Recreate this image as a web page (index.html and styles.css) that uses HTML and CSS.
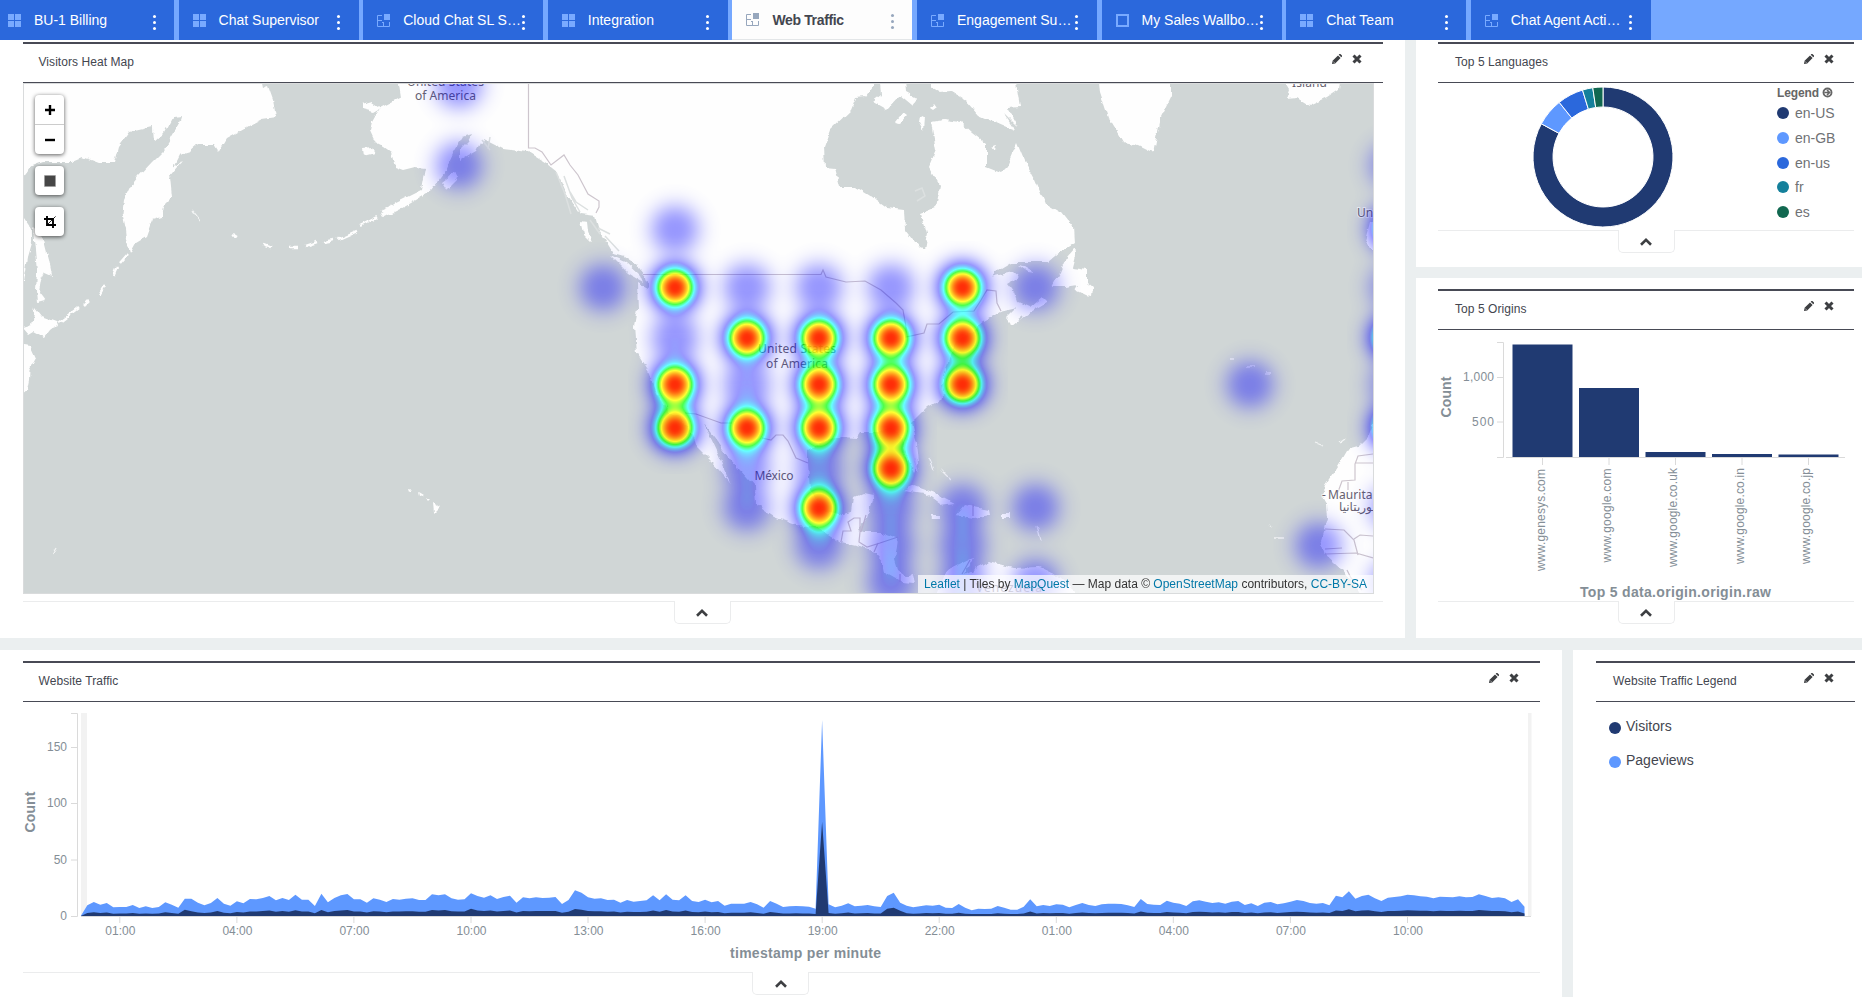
FILE: index.html
```
<!DOCTYPE html>
<html lang="en">
<head>
<meta charset="utf-8">
<title>Web Traffic</title>
<link rel="stylesheet" href="styles.css">
</head>
<body>
<svg class="defs" width="0" height="0" aria-hidden="true">
  <symbol id="i-grid" viewBox="0 0 13 13"><path d="M0 0h6v6H0zM7 0h6v6H7zM0 7h6v6H0zM7 7h6v6H7z" fill="currentColor"/></symbol>
  <symbol id="i-dash" viewBox="0 0 13 13"><path d="M7 0h6v6H7z" fill="currentColor"/><path d="M5 1.500H.5v11h12V8M.5 6.500h4.500M6.500 12.500V9M5 8.500h2" fill="none" stroke="currentColor"/></symbol>
  <symbol id="i-box" viewBox="0 0 13 13"><path d="M1 1h11v11H1z" fill="none" stroke="currentColor" stroke-width="2"/></symbol>
  <symbol id="i-pen" viewBox="0 0 10 10"><path d="M0 10l.6-3.200L6 1.400 8.600 4 3.200 9.400zM6.700.7L7.400 0h1L10 1.600v1L9.300 3.300z" fill="currentColor"/><path d="M1.300 7.600l1.100 1.100" stroke="#fff" stroke-width=".7"/></symbol>
  <symbol id="i-x" viewBox="0 0 10 10"><path d="M1.500 1.500l7 7M8.500 1.500l-7 7" stroke="currentColor" stroke-width="3"/></symbol>
  <symbol id="i-up" viewBox="0 0 12 8"><path d="M1 6.800L6 1.900l5 4.900" fill="none" stroke="currentColor" stroke-width="2.600"/></symbol>
</svg>

<nav class="tabs">
  <div class="tab"><svg class="ico"><use href="#i-grid"/></svg><span>BU-1 Billing</span><i class="dots"></i></div>
  <div class="tab"><svg class="ico"><use href="#i-grid"/></svg><span>Chat Supervisor</span><i class="dots"></i></div>
  <div class="tab"><svg class="ico"><use href="#i-dash"/></svg><span>Cloud Chat SL S…</span><i class="dots"></i></div>
  <div class="tab"><svg class="ico"><use href="#i-grid"/></svg><span>Integration</span><i class="dots"></i></div>
  <div class="tab active"><svg class="ico"><use href="#i-dash"/></svg><span>Web Traffic</span><i class="dots"></i></div>
  <div class="tab"><svg class="ico"><use href="#i-dash"/></svg><span>Engagement Su…</span><i class="dots"></i></div>
  <div class="tab"><svg class="ico"><use href="#i-box"/></svg><span>My Sales Wallbo…</span><i class="dots"></i></div>
  <div class="tab"><svg class="ico"><use href="#i-grid"/></svg><span>Chat Team</span><i class="dots"></i></div>
  <div class="tab"><svg class="ico"><use href="#i-dash"/></svg><span>Chat Agent Acti…</span><i class="dots"></i></div>
</nav>

<main class="board">
  <div class="row top">
    <section class="panel heat">
      <header class="head"><h2>Visitors Heat Map</h2><div class="acts"><svg><use href="#i-pen"/></svg><svg><use href="#i-x"/></svg></div></header>
      <div class="map">
        <svg class="base" viewBox="24 84 1349 510">
          <defs><filter id="coast" x="0" y="0" width="100%" height="100%" color-interpolation-filters="sRGB"><feTurbulence type="fractalNoise" baseFrequency=".1" numOctaves="3" seed="4"/><feDisplacementMap in="SourceGraphic" scale="6" xChannelSelector="R" yChannelSelector="G"/></filter></defs>
          <g class="land" filter="url(#coast)">
            <rect x="-20" y="40" width="1440" height="600" fill="none"/>
            <path d="M10 70H258L262 88 268 86 273 100 276 117 262 119 245 128 238 132 227 138 218 153 213 145 198 145 190 152 180 155 174 167 182 162 170 177 172 197 164 205 162 217 152 220 146 237 136 243 130 254 127 240 126 230 122.500 213 124 200 130 187 138 177 152 162 164 150 174 133 179 126 182 117 172 118 164 133 153 143 152 127 130 132 119 147 115 163 99 163 83 157 71 162 43 162 30 167 22 178z"/>
            <path d="M16 205L24 218 32 230 32 243 28 257 24 282 16 282z"/>
            <path d="M33 228L43 237 49 260 52 275 45 272 41 280 39 292 45 300 37 302 36 290 37 273 35 250z"/>
            <path d="M35 308L42 317 56 322 58 327 50 330 44 338 33 332 28 335 22 328 32 325z"/>
            <path d="M16 345L31 347 36 358 29.500 370 29 380 27 390 20 396z"/>
            <path d="M395 70L399 84 401 97 380 108 372 122 370 130 376 143 384 147 391 152 395 167 403 170 415 167 425 168 421 190 397 202 380 214 382 218 400 209 430 191 445 172 453 154 463 137 472 134 468 141 460 149 460 161 477 151 483 139 503 149 528 152 547 164 557 172 567 194 580 214 595 216 598 227 613 253 624 256 637 265 646 277 648 288 637 282 638 310 635 327 637 353 649 373 656 393 667 410 681 418 692 433 697 447 713 463 730 483 717 453 706 430 703 423 714 437 731 460 755 487 756 505 774 517 796 525 817 527 842 543 864 548 874 552 883 563 885 572 903 582 914 583 912 575 906 577 897 570 894 560 897 538 881 532 864 532 858 530 867 517 874 495 864 493 853 498 851 512 839 515 824 512 810 490 808 463 808 450 824 440 842 437 856 438 860 432 881 432 890 427 901 437 908 460 914 472 919 463 917 443 912 423 928 407 944 398 942 383 946 370 956 343 983 322 1000 312 1017 308 1007 318 1012 325 1022 317 1033 310 1047 302 1042 297 1030 307 1018 302 1015 293 1008 284 1019 277 1013 272 990 277 987 282 1000 268 1010 262 1033 262 1048 262 1060 252 1074 243 1073 227 1062 213 1045 203 1035 180 1024 160 1017 143 1007 167 1001 173 986 167 986 143 973 133 961 122 944 120 931 122 936 150 929 167 940 187 936 207 921 213 927 233 924 250 919 248 905 230 904 210 887 208 872 197 856 187 840 187 835 168 825 167 824 147 830 130 851 110 856 98 866 97 875 84 875 70z"/>
            <path d="M879 70H904L906 92 917 98 912 105 900 95 886 110 872 102 881 95z"/>
            <path d="M931 70H1014L1020 107 1007 108 1018 127 1004 113 1016 131 1003 126 978 115 965 100 952 92 940 93 931 88z"/>
            <path d="M896 122L904 112 908 115 901 123zM919 122l1-6 4 2-1 12zM930 108l4-5 3 4-4 3zM993 146l4-2-1 6zM362 105l10-3 9 6-7 4-12-3zM362 149l10-1 3 5-12 3z"/>
            <path d="M1098 70H1171V97L1161 117 1154 153 1138 145 1123 142 1108 117 1100 93z"/>
            <path d="M1277 70H1341L1339 90 1327 98 1310 106 1297 98 1286 99 1289 90z"/>
            <path d="M1074 249L1076 252 1072 268 1087 270 1087 283 1093 288 1092 296 1085 295 1075 290 1078 285 1065 287 1052 287 1060 273 1067 257zM1018 265l6 1 12 7-8-1zM442 182l13-10 3 7-11 11zM610 255L626 262 640 275 643 282 628 273zM580 221l7 1 1 9 4 12-9-9z"/>
            <path d="M903 490L914 485 935 493 955 503 940 505 924 493zM956 515L964 505 989 510 990 515 974 518zM930 515h10v4h-8zM1001 514h10v4h-10zM433 503l7 4-6 6zM419 492l5 3-4 1zM425 497l5 2-2 2zM408 489l4 1-3 2z"/>
            <path d="M947 570L974 557 964 575 989 562 1014 568 1039 567 1060 577 1085 600H935z"/>
            <path d="M1390 420L1373 424 1368 437 1358 447 1347 450 1337 467 1325 485 1322 495 1327 504 1328 519 1321 541 1325 554 1343 570 1357 589 1370 610H1390zM1390 222l-20 0-5 20 7 7h18z"/>
            <path d="M127 255L120 263M117 267L113 277M105 285L99 295M89 301L84 306M79 308L58 324M232 233l5 3M263 245l8 3M290 247h8M305 246l12-4M322 242l12-2M338 239l18-8M360 226l18-9M381 212l16-7" class="isl"/>
            <path d="M915 459l3 12M1316 443l8 3M1340 442l4-3M1269 524l3 2M1275 538h9M1230 359h3M1246 366h10M1266 373h5M929 457l5 12M941 470l10 10M1037 525l4 15M192 211l8 10M57 547l-4 7" class="tiny"/>
          </g>
          <g class="sea"><path d="M556 172l9 22 6 20M564 176l8 22 8 14M570 192l6 10 12 8M590 220l10 14M605 236l14 15M598 228l12 6M482 140l8 10M490 137l-2 12M915 191l7-3 3 8-8 5"/></g>
          <g class="borders">
            <path d="M528.500 84V148H535L542 152 551 165 564 155 570 165 578 175 588 194 599 201V207L596 213"/>
            <path d="M643 274.500H821L823 270 826 277 846 282 865 281 881 290 896 303 903 310 906 327V337L924 333 927 324H939L953 312 974 311 981 300 987 290 996 291 997 303 1001 311"/>
            <path d="M685 413L696 414 721 423H732M762 438L771 440 776 435H783L788 441 796 458 808 463"/>
            <path d="M841 542L843 531H851L848 522 854 518H860V532M861 532L866 515M860 532L859 542 867 547 880 543 898 537M874 552L878 543M900 582V574M973 504V516M962 574L970 560"/>
            <path d="M1373 454L1358 456 1355 464V480L1342 481 1338 492M1355 463H1373M1348 490V482M1325 554L1356 553 1373 558M1325 549L1342 548M1325 529L1344 530 1354 540 1358 555M1354 539L1360 535 1373 536M1347 570L1351 578 1362 590"/>
          </g>
          <g class="names">
            <text x="407" y="86" textLength="77">United States</text><text x="415" y="100" textLength="61">of America</text>
            <text x="758" y="353" textLength="78">United States</text><text x="766" y="367.500" textLength="62">of America</text>
            <text x="754.500" y="480" textLength="39">México</text><text x="1292" y="87" textLength="35">Island</text>
            <text x="1357" y="217">United</text><text x="1328" y="499" textLength="62">Mauritanie</text><text x="1322" y="499" >-</text>
            <text x="1339" y="511" class="ar" direction="rtl" text-anchor="end">موريتانيا</text>
            <text x="976" y="592" textLength="66">Venezuela</text>
          </g>
        </svg>
        <canvas class="blobs" id="heat" width="1349" height="510"></canvas>
        <div class="ctl">
          <div class="btns"><button><svg viewBox="0 0 12 12"><path d="M6 1v10M1 6h10" stroke="#000" stroke-width="2.400"/></svg></button><button><svg viewBox="0 0 12 12"><path d="M1 6h10" stroke="#000" stroke-width="2.400"/></svg></button></div>
          <div class="btns"><button><svg viewBox="0 0 12 12"><path d="M.5.500h11v11H.5z" fill="#464646" stroke="#999" stroke-width=".5"/></svg></button></div>
          <div class="btns"><button><svg viewBox="0 0 14 14"><path d="M3.500 0v10.500H14M0 3.500h10.500V14" fill="none" stroke="#000" stroke-width="2.200"/><path d="M4 10L13.500.5" stroke="#000"/></svg></button></div>
        </div>
        <div class="attr"><a>Leaflet</a> | Tiles by <a>MapQuest</a> — Map data © <a>OpenStreetMap</a> contributors, <a>CC-BY-SA</a></div>
      </div>
      <footer class="foot"><div class="fold"><svg><use href="#i-up"/></svg></div></footer>
    </section>

    <div class="side">
      <section class="panel langs">
        <header class="head"><h2>Top 5 Languages</h2><div class="acts"><svg><use href="#i-pen"/></svg><svg><use href="#i-x"/></svg></div></header>
        <div class="langbody">
          <svg class="donut" id="donut" viewBox="-72 -72 144 144"></svg>
          <div class="legend">
            <b>Legend <svg viewBox="0 0 12 12"><circle cx="6" cy="6" r="4.400" fill="none" stroke="#666" stroke-width="2"/><path d="M2.500 6h6M5.500 3.300L8.200 6 5.500 8.700" fill="none" stroke="#666" stroke-width="1.800"/></svg></b>
            <p><i class="c1"></i>en-US</p><p><i class="c2"></i>en-GB</p><p><i class="c3"></i>en-us</p><p><i class="c4"></i>fr</p><p><i class="c5"></i>es</p>
          </div>
        </div>
        <footer class="foot"><div class="fold"><svg><use href="#i-up"/></svg></div></footer>
      </section>
      <section class="panel origins">
        <header class="head"><h2>Top 5 Origins</h2><div class="acts"><svg><use href="#i-pen"/></svg><svg><use href="#i-x"/></svg></div></header>
        <svg class="bars" viewBox="1438 330 416 271">
          <g class="axis"><path d="M1497 342.500H1503.500V457.500H1497M1497 377.500H1503M1497 422H1503M1506 457.500H1845M1542.500 458V465M1609 458V465M1675.500 458V465M1742 458V465M1808.500 458V465"/></g>
          <g fill="#203a72"><path d="M1512.500 344.500h60V457h-60zM1579 388h60v69h-60zM1645.500 452h60v5h-60zM1712 454h60v3h-60zM1778.500 454.500h60v2.500h-60z"/></g>
          <g class="lab"><text x="1494" y="381" text-anchor="end" textLength="31">1,000</text><text x="1494" y="426" text-anchor="end" textLength="22">500</text>
            <text transform="translate(1545 571) rotate(-90)" textLength="102">www.genesys.com</text>
            <text transform="translate(1611 562.500) rotate(-90)" textLength="94">www.google.com</text>
            <text transform="translate(1677 567) rotate(-90)" textLength="99">www.google.co.uk</text>
            <text transform="translate(1744 564) rotate(-90)" textLength="96">www.google.co.in</text>
            <text transform="translate(1810 564) rotate(-90)" textLength="96">www.google.co.jp</text></g>
          <g class="ttl"><text transform="translate(1451 417.500) rotate(-90)" textLength="41">Count</text><text x="1580" y="597" textLength="191">Top 5 data.origin.origin.raw</text></g>
        </svg>
        <footer class="foot"><div class="fold"><svg><use href="#i-up"/></svg></div></footer>
      </section>
    </div>
  </div>

  <div class="row bottom">
    <section class="panel traffic">
      <header class="head"><h2>Website Traffic</h2><div class="acts"><svg><use href="#i-pen"/></svg><svg><use href="#i-x"/></svg></div></header>
      <svg class="area" viewBox="23 702 1517 270">
        <path d="M81 713h6v203h-6zM1528 713h3.500v203h-3.500z" fill="#f2f2f2"/>
        <path id="views" fill="#5e98ff"/><path id="visits" fill="#203a72"/>
        <g class="axis"><path d="M71 713.500H77.500V916.500H71M71 747.500H77M71 803.500H77M71 860H77M81 916.500H1531"/><path id="ticks"/></g>
        <g class="lab"><text x="67" y="751" text-anchor="end">150</text><text x="67" y="807" text-anchor="end">100</text><text x="67" y="864" text-anchor="end">50</text><text x="67" y="920" text-anchor="end">0</text></g>
        <g class="lab" id="hours"></g>
        <g class="ttl"><text transform="translate(35 832.500) rotate(-90)" textLength="41">Count</text><text x="730" y="958" textLength="151">timestamp per minute</text></g>
      </svg>
      <footer class="foot"><div class="fold"><svg><use href="#i-up"/></svg></div></footer>
    </section>
    <section class="panel tlegend">
      <header class="head"><h2>Website Traffic Legend</h2><div class="acts"><svg><use href="#i-pen"/></svg><svg><use href="#i-x"/></svg></div></header>
      <p><i class="c1"></i>Visitors</p><p><i class="c2"></i>Pageviews</p>
    </section>
  </div>
</main>
<script src="app.js"></script>
</body>
</html>
```
FILE: styles.css
```
* { box-sizing: border-box; }
body { margin: 0; width: 1862px; height: 997px; overflow: hidden; background: #ebeff0; font-family: "Liberation Sans", Arial, sans-serif; color: #43464f; }
.defs { position: absolute; }
h2, p { margin: 0; font-weight: normal; }

.tabs { display: flex; gap: 4.6px; height: 40px; background: #75a8ff; margin-left: -6px; width: 1868px; }
.tab { flex: 0 0 180px; display: flex; align-items: center; background: #2b68dc; color: #fff; font-size: 14px; padding-left: 14px; }
.tab .ico { width: 13px; height: 13px; color: #79aaff; margin-right: 13px; flex: none; }
.tab span { flex: 1; white-space: nowrap; }
.tab.active { background: #fdfdfd; color: #43464f; font-weight: bold; border-bottom: 1px solid #e3e6e8; }
.tab.active span { letter-spacing: -0.35px; }
.tab.active .ico { color: #97a7bd; }
.dots { width: 3px; height: 3px; margin: 4px 18.500px 0 0; border-radius: 50%; background: currentColor; box-shadow: 0 -6px currentColor, 0 6px currentColor; }
.active .dots { color: #97a7bd; }

.board { display: flex; flex-direction: column; gap: 12px; }
.row { display: flex; gap: 11px; }
.top { height: 598px; }
.bottom { height: 347px; }
.panel { background: #fff; }
.heat { width: 1405px; padding: 2px 22px 0 23px; }
.side { width: 446px; display: flex; flex-direction: column; gap: 11px; }
.langs { height: 227px; padding: 2px 8px 0 22px; }
.origins { height: 360px; padding: 11px 8px 0 22px; }
.traffic { width: 1562px; padding: 11px 22px 0 23px; }
.tlegend { width: 289px; padding: 11px 7px 0 23px; }

.head { height: 41px; border-top: 2px solid #484a55; border-bottom: 1px solid #484a55; display: flex; justify-content: space-between; padding: 0 21px 0 15.500px; }
.side .head, .tlegend .head { padding-left: 17px; }
.side .head { padding-right: 20px; }
.head h2 { font-size: 12px; line-height: 36px; letter-spacing: .06px; }
.acts { display: flex; gap: 10px; padding-top: 10px; color: #3d3f42; }
.acts svg { width: 10px; height: 10px; }
.foot { border-top: 1px solid #ebeced; display: flex; justify-content: center; }
.fold { width: 57px; height: 23px; margin-top: -1px; background: #fff; border: 1px solid #ebeced; border-top: 0; border-radius: 0 0 5px 5px; display: flex; justify-content: center; padding-top: 8px; color: #3d3f42; }
.fold svg { width: 12px; height: 8px; }
.heat .fold, .traffic .fold { margin-right: 2px; }

.map { position: relative; width: 1351px; height: 511px; margin-bottom: 7px; border: 1px solid #d9dbdc; background: #d0d6d6; overflow: hidden; }
.base { display: block; width: 1349px; height: 510px; }
.blobs { position: absolute; left: 0; top: 0; }
.land path { fill: #fefefe; }
.land .isl { fill: none; stroke: #fefefe; stroke-width: 2.5; }
.land .tiny { fill: none; stroke: #f2f4f4; stroke-width: 1.3; }
.sea path { fill: none; stroke: #dce0e0; stroke-width: 1.5; }
.borders path { fill: none; stroke: #cdc5cd; stroke-width: 1.2; }
.names text { font: 12px "Noto Sans", "Open Sans", sans-serif; fill: #67616f; stroke: #fff; stroke-opacity: .6; stroke-width: 2px; paint-order: stroke; }
.names .ar { font: 12px "DejaVu Sans", sans-serif; }
.ctl { position: absolute; left: 11px; top: 11px; display: flex; flex-direction: column; gap: 12px; }
.btns { width: 29px; background: #fff; border-radius: 4px; box-shadow: 0 1px 4px rgba(0,0,0,.65); }
.btns button { display: flex; align-items: center; justify-content: center; width: 29px; height: 29px; padding: 0; border: 0; background: none; }
.btns button + button { border-top: 1px solid #ccc; height: 30px; }
.btns svg { width: 12px; height: 12px; }
.attr { position: absolute; right: 0; bottom: 0; height: 18px; padding: 0 6px; line-height: 18px; font-size: 12px; color: #333; background: rgba(255,255,255,.7); white-space: nowrap; }
.attr a { color: #0078a8; }

.langbody { display: flex; height: 147px; }
.donut { width: 144px; height: 144px; margin: 2px 0 0 93px; }
.legend { margin: 1px 0 0 102px; color: #707275; font-size: 14px; }
.legend b { display: flex; align-items: center; gap: 3px; height: 17px; font-size: 12px; letter-spacing: -.1px; color: #666; }
.legend b svg { width: 11px; height: 11px; }
.legend p { display: flex; align-items: center; height: 24.7px; }
.legend i, .tlegend i { width: 12px; height: 12px; border-radius: 50%; margin-right: 6px; }
.tlegend p { display: flex; align-items: center; font-size: 14px; height: 34px; padding-left: 13px; }
.tlegend .head + p { margin-top: 7px; }
.tlegend i { margin-right: 5px; margin-top: 3px; }
.c1 { background: #203a72; }
.c2 { background: #5e98ff; }
.c3 { background: #2b68dc; }
.c4 { background: #14809b; }
.c5 { background: #116850; }

.bars { display: block; width: 416px; height: 271px; }
.area { display: block; width: 1517px; height: 270px; }
.axis path { fill: none; stroke: #dadada; stroke-width: 1; }
.lab text { font-size: 12px; fill: #848e96; }
.ttl text { font-size: 14px; font-weight: bold; fill: #848e96; }
```
FILE: app.js
```
// Heat layer: intensity is accumulated per pixel, then coloured through a gradient.
(function () {
  var c = document.getElementById('heat'), g = c.getContext('2d'), W = c.width, H = c.height, OX = 24.5, OY = 84;
  var hi = [[675,287],[675,384],[675,427.500],[747,337.500],[747,427.500],[819,337.500],[819,384],[819,427.500],[819,507.500],
    [891,337.500],[891,384],[891,427.500],[891,468],[962.500,287],[962.500,337.500],[962.500,384]];
  var lo = [[459,84],[459,165],[675,229],[603,287],[747,287],[819,287],[891,287],[1035.500,287],[675,337.500],[747,384],
    [747,468],[747,507],[819,468],[819,545],[891,507],[891,545],[891,582],[962.500,507],[962.500,545],[962.500,582],
    [962.500,619],[1035.500,507],[1035.500,582],[1250,384],[1318.500,545],[1394,165],[1394,287],[1394,384],[1394,507],[1394,582]];
  var pts = hi.map(function (p) { return [p[0], p[1], 0.97]; })
    .concat(lo.map(function (p) { return [p[0], p[1], 0.4]; }))
    .concat([[1394,228,0.9],[1394,337,1],[1394,427,1]]);
  var a = new Float32Array(W * H);
  pts.forEach(function (p) {
    var cx = p[0] - OX, cy = p[1] - OY;
    for (var y = Math.max(0, cy - 46 | 0); y < Math.min(H, cy + 46); y++)
      for (var x = Math.max(0, cx - 46 | 0); x < Math.min(W, cx + 46); x++) {
        var d = Math.hypot(x - cx, y - cy), f = p[2] * Math.exp(-Math.pow(d / 25.5, 2.6)), k = y * W + x;
        a[k] = 1 - (1 - a[k]) * (1 - f);
      }
  });
  var st = [[0,0,0,255],[0.4,0,0,255],[0.6,0,255,255],[0.7,0,255,0],[0.8,255,255,0],[1,255,0,0]];
  var im = g.createImageData(W, H);
  for (var k = 0; k < a.length; k++) {
    var v = a[k]; if (v < 0.004) continue;
    var i = 1; while (i < 5 && v > st[i][0]) i++;
    var t = (v - st[i-1][0]) / (st[i][0] - st[i-1][0]);
    for (var ch = 0; ch < 3; ch++) im.data[k*4+ch] = st[i-1][ch+1] + (st[i][ch+1] - st[i-1][ch+1]) * t;
    im.data[k*4+3] = v * 255;
  }
  g.putImageData(im, 0, 0);
})();

// Language donut
(function () {
  var e = [[0,298.300,'#203a72'],[298.300,321.300,'#5e98ff'],[321.300,343,'#2b68dc'],[343,351.600,'#14809b'],[351.600,360,'#116850']];
  function P(r, d) { d *= Math.PI / 180; return (r * Math.sin(d)).toFixed(2) + ' ' + (-r * Math.cos(d)).toFixed(2); }
  document.getElementById('donut').innerHTML = e.map(function (s) {
    var L = s[1] - s[0] > 180 ? 1 : 0;
    return '<path fill="' + s[2] + '" stroke="#fff" d="M' + P(70, s[0]) + 'A70 70 0 ' + L + ' 1 ' + P(70, s[1]) +
      'L' + P(50, s[1]) + 'A50 50 0 ' + L + ' 0 ' + P(50, s[0]) + 'Z"/>';
  }).join('');
})();

// Stacked traffic areas, one sample every ten minutes
(function () {
  var v = [0,32,42,34,39,26,27,27,33,24,29,24,27,41,34,25,52,52,40,32,39,54,37,31,44,38,51,50,54,60,47,54,48,64,49,49,30,67,41,54,62,66,50,50,40,53,49,42,51,49,52,53,48,48,65,62,65,53,49,50,68,60,55,62,51,57,61,40,56,53,56,54,55,57,36,48,77,70,56,52,53,48,49,40,
    48,43,45,47,62,47,65,49,47,62,45,42,49,41,45,31,37,37,37,42,35,25,45,37,27,29,30,29,28,22,588,35,26,31,38,29,31,33,29,27,60,70,40,31,26,29,32,31,34,25,24,36,25,17,22,21,22,30,25,19,19,28,50,29,33,30,35,34,26,33,39,33,30,35,37,37,36,32,27,51,36,34,33,46,40,37,30,44,47,43,39,41,37,43,
    45,33,38,30,40,42,35,38,43,48,45,39,37,39,32,61,56,74,52,60,64,53,45,55,57,59,64,62,59,58,53,58,57,56,59,56,57,65,60,54,56,53,42,50,28];
  var own = {0:0,16:19,60:22,114:283,124:22,125:25,126:16};
  function path(h) {
    return 'M80.800 916' + v.map(function (n, i) { return 'L' + (80.8 + 6.503 * i).toFixed(1) + ' ' + (916 - h(n, i) / 3).toFixed(1); }).join('') + 'V916Z';
  }
  document.getElementById('views').setAttribute('d', path(function (n) { return n; }));
  document.getElementById('visits').setAttribute('d', path(function (n, i) { return i in own ? own[i] : Math.max(6, n * 0.27); }));
  var t = '', d = '';
  ['01','04','07','10','13','16','19','22','01','04','07','10'].forEach(function (h, i) {
    var x = 119.8 + 117.06 * i;
    t += '<text text-anchor="middle" x="' + (x + .5).toFixed(1) + '" y="935">' + h + ':00</text>';
    d += 'M' + x.toFixed(1) + ' 917v6';
  });
  document.getElementById('hours').innerHTML = t;
  document.getElementById('ticks').setAttribute('d', d);
})();
```
